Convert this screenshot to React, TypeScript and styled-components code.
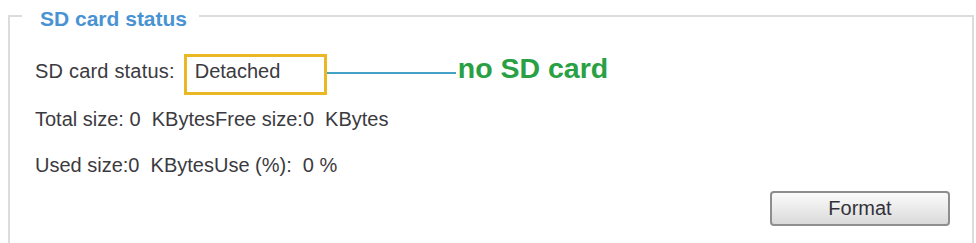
import { createGlobalStyle } from "styled-components";
import styled from "styled-components";

const Global = createGlobalStyle`
    html, body {
        margin: 0;
        padding: 0;
        background: #ffffff;
        overflow: hidden;
    }
    body {
        font-family: "Liberation Sans", Arial, sans-serif;
        color: #3b3a3f;
    }
`;

const Panel = styled.fieldset`
    box-sizing: border-box;
    width: 966px;
    height: 280px;
    margin: 1px 0 0 8px;
    padding: 0 22px 0 25px;
    border: 2px solid #dcdcdc;
    min-width: 0;
`;

const Title = styled.legend`
    margin-left: -13px;
    padding: 6px 12px 0 18px;
    font-size: 21px;
    line-height: 24px;
    font-weight: bold;
    color: #4a93d2;
`;

const Body = styled.div`
    display: flex;
    flex-direction: column;
    font-size: 20px;
    line-height: 23px;
`;

const StatusRow = styled.div`
    display: flex;
    align-items: baseline;
    margin-top: 23px;
`;

const Label = styled.span`
    margin-right: 9px;
    letter-spacing: 0.2px;
`;

const StatusBox = styled.div`
    box-sizing: border-box;
    width: 143px;
    height: 41px;
    padding: 3px 8px 0 8px;
    border: 3px solid #e9b824;
`;

const Connector = styled.div`
    align-self: flex-start;
    width: 129px;
    height: 2px;
    margin-top: 18px;
    background: #45a2c7;
`;

const Note = styled.span`
    margin-left: 2px;
    font-size: 28.5px;
    font-weight: bold;
    color: #28a043;
`;

const InfoRow = styled.div<{ $gap: number }>`
    margin-top: ${(p) => p.$gap}px;
    white-space: pre;
`;

const Actions = styled.div`
    display: flex;
    justify-content: flex-end;
    margin-top: 14px;
`;

const Button = styled.button`
    width: 180px;
    height: 35px;
    padding: 0;
    border: 2px solid #8e8e8e;
    border-radius: 4px;
    background: linear-gradient(#fbfbfb, #e9e9e9 55%, #d9d9d9);
    font-family: "Liberation Sans", Arial, sans-serif;
    font-size: 20px;
    color: #33323a;
`;

export default function App() {
    return (
        <>
            <Global />
            <Panel>
                <Title>SD card status</Title>
                <Body>
                    <StatusRow>
                        <Label>SD card status:</Label>
                        <StatusBox>Detached</StatusBox>
                        <Connector />
                        <Note>no SD card</Note>
                    </StatusRow>
                    <InfoRow $gap={13}>{"Total size: 0  KBytesFree size:0  KBytes"}</InfoRow>
                    <InfoRow $gap={23}>{"Used size:0  KBytesUse (%):  0 %"}</InfoRow>
                    <Actions>
                        <Button>Format</Button>
                    </Actions>
                </Body>
            </Panel>
        </>
    );
}
